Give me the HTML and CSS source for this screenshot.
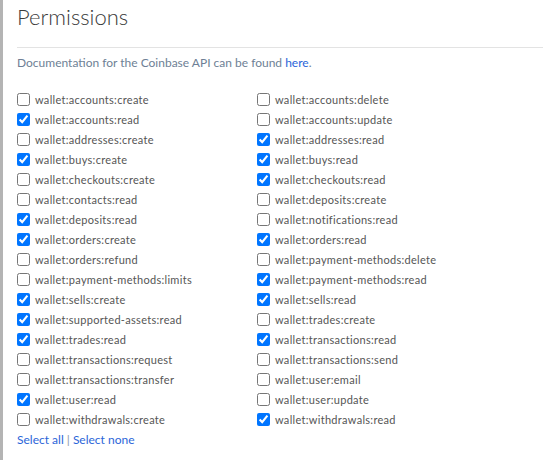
FILE: index.html
```html
<!DOCTYPE html>
<html lang="en">
<head>
  <meta charset="UTF-8" />
  <title>Permissions</title>
  <link rel="stylesheet" href="styles.css">
</head>
<body>
  <div class="painel">
    <h1>Permissions</h1>
    <p class="doc">Documentation for the Coinbase API can be found <a href="#">here</a>.</p>

    <div class="grade">
      <label><input type="checkbox"> wallet:accounts:create</label>
      <label><input type="checkbox"> wallet:accounts:delete</label>
      <label><input type="checkbox" checked> wallet:accounts:read</label>
      <label><input type="checkbox"> wallet:accounts:update</label>
      <label><input type="checkbox"> wallet:addresses:create</label>
      <label><input type="checkbox" checked> wallet:addresses:read</label>
      <label><input type="checkbox" checked> wallet:buys:create</label>
      <label><input type="checkbox" checked> wallet:buys:read</label>
      <label><input type="checkbox"> wallet:checkouts:create</label>
      <label><input type="checkbox" checked> wallet:checkouts:read</label>
      <label><input type="checkbox"> wallet:contacts:read</label>
      <label><input type="checkbox"> wallet:deposits:create</label>
      <label><input type="checkbox" checked> wallet:deposits:read</label>
      <label><input type="checkbox"> wallet:notifications:read</label>
      <label><input type="checkbox" checked> wallet:orders:create</label>
      <label><input type="checkbox" checked> wallet:orders:read</label>
      <label><input type="checkbox"> wallet:orders:refund</label>
      <label><input type="checkbox"> wallet:payment-methods:delete</label>
      <label><input type="checkbox"> wallet:payment-methods:limits</label>
      <label><input type="checkbox" checked> wallet:payment-methods:read</label>
      <label><input type="checkbox" checked> wallet:sells:create</label>
      <label><input type="checkbox" checked> wallet:sells:read</label>
      <label><input type="checkbox" checked> wallet:supported-assets:read</label>
      <label><input type="checkbox"> wallet:trades:create</label>
      <label><input type="checkbox" checked> wallet:trades:read</label>
      <label><input type="checkbox" checked> wallet:transactions:read</label>
      <label><input type="checkbox"> wallet:transactions:request</label>
      <label><input type="checkbox"> wallet:transactions:send</label>
      <label><input type="checkbox"> wallet:transactions:transfer</label>
      <label><input type="checkbox"> wallet:user:email</label>
      <label><input type="checkbox" checked> wallet:user:read</label>
      <label><input type="checkbox"> wallet:user:update</label>
      <label><input type="checkbox"> wallet:withdrawals:create</label>
      <label><input type="checkbox" checked> wallet:withdrawals:read</label>
    </div>

    <div class="selecao">
      <a href="#">Select all</a> | <a href="#">Select none</a>
    </div>
  </div>
</body>
</html>
```

FILE: styles.css
```css
html, body {
  margin: 0;
  height: 100%;
  background: #fff;
}
body {
  font-family: Lato, "Open Sans", sans-serif;
  border-left: 3px solid #b4b4b4;
  box-sizing: border-box;
}
.painel {
  padding: 0 0 0 14px;
}
h1 {
  margin: 0;
  padding: 3px 0 0;
  height: 44px;
  font-size: 22px;
  font-weight: 300;
  color: #3a3a3a;
  border-bottom: 1px solid #e3e3e3;
}
.doc {
  margin: 0;
  padding-top: 7px;
  font-size: 12px;
  color: #6e7f95;
  height: 34px;
}
.doc a, .selecao a {
  color: #2b65d9;
  text-decoration: none;
}
.grade {
  display: grid;
  grid-template-columns: 240px 240px;
  grid-auto-rows: 20px;
}
.grade label {
  display: flex;
  align-items: center;
  font-size: 11px;
  color: #555;
  letter-spacing: 0.3px;
}
.grade input {
  margin: 0 5px 0 0;
  width: 13px;
  height: 13px;
}
.selecao {
  margin-top: 3px;
  font-size: 12px;
  color: #8a97a8;
}
```
